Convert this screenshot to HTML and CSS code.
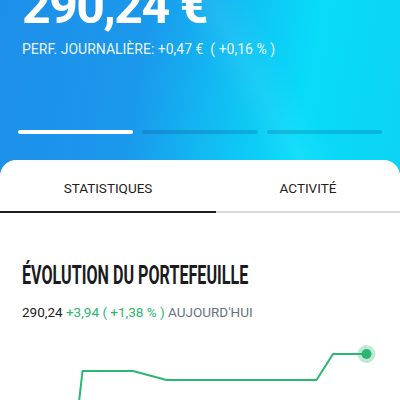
FILE: index.html
```html
<!DOCTYPE html>
<html lang="fr">
<head>
    <meta charset="UTF-8">
    <meta name="viewport" content="width=device-width, initial-scale=1.0">
    <title>Portefeuille</title>
    <link rel="stylesheet" href="styles.css">
</head>
<body>

<div class="header">
    <div class="total">290,24 €</div>
    <div class="perf">PERF. JOURNALIÈRE: +0,47 € &nbsp;( +0,16 % )</div>
    <div class="steps">
        <span class="step active"></span>
        <span class="step"></span>
        <span class="step"></span>
    </div>
</div>

<div class="sheet">
    <div class="tabs">
        <div class="tab selected">STATISTIQUES</div>
        <div class="tab">ACTIVITÉ</div>
    </div>

    <div class="section">
        <h2>ÉVOLUTION DU PORTEFEUILLE</h2>
        <p class="resume">
            <span class="valeur">290,24</span>
            <span class="gain">+3,94 ( +1,38 % )</span>
            <span class="periode">AUJOURD'HUI</span>
        </p>
        <svg class="chart" width="400" height="64" viewBox="0 340 400 64">
            <polyline points="78,410 82.5,370 133,370 166.5,379 316.5,379 333,353 366.5,353"
                      fill="none" stroke="#2bb673" stroke-width="2" stroke-linejoin="round"/>
            <circle cx="366.5" cy="353" r="9" fill="#2bb673" opacity="0.3"/>
            <circle cx="366.5" cy="353" r="5" fill="#2bb673"/>
        </svg>
    </div>
</div>

</body>
</html>
```

FILE: styles.css
```css
body {
    margin: 0;
    width: 400px;
    height: 400px;
    overflow: hidden;
    font-family: 'Roboto', 'Liberation Sans', sans-serif;
    background-color: #fff;
}

/* Bandeau bleu du haut */
.header {
    display: flex;
    flex-direction: column;
    height: 176px;
    padding: 0 18px 0 22px;
    box-sizing: border-box;
    color: #fff;
    background:
        linear-gradient(60deg, rgba(255, 255, 255, 0) 55%, rgba(255, 255, 255, 0.06) 62%, rgba(255, 255, 255, 0) 70%),
        linear-gradient(100deg, #1e8fe9 0%, #1a98ec 35%, #10c2f4 58%, #07dcf9 75%, #0dd3f3 100%);
}

.total {
    margin-top: -19px;
    font-size: 50px;
    font-weight: 700;
    line-height: 50px;
    letter-spacing: -1.5px;
}

.perf {
    margin-top: 10px;
    font-size: 14px;
    line-height: 16px;
    color: rgba(255, 255, 255, 0.92);
}

.steps {
    display: flex;
    gap: 9px;
    margin-top: 73px;
    margin-left: -4px;
}

.step {
    flex: 1;
    height: 4px;
    border-radius: 2px;
    background-color: rgba(0, 60, 110, 0.2);
}

.step.active {
    background-color: #fff;
}

/* Partie blanche */
.sheet {
    margin-top: -16px;
    background-color: #fff;
    border-radius: 16px 16px 0 0;
    position: relative;
}

.tabs {
    display: flex;
}

.tab {
    flex: 1;
    text-align: center;
    padding: 21px 0 15px;
    font-size: 13.5px;
    line-height: 15px;
    font-weight: 400;
    color: #1e1e20;
    border-bottom: 2px solid #d6d7dc;
}

.tab.selected {
    flex: 0 0 216px;
    border-bottom-color: #1f1f22;
}

.section {
    padding: 0 22px;
}

.section h2 {
    display: inline-block;
    margin: 50px 0 0;
    font-size: 25px;
    line-height: 26px;
    font-weight: 700;
    color: #1b1b1d;
    white-space: nowrap;
    transform: scaleX(0.645);
    transform-origin: left center;
}

.resume {
    margin: 15px 0 0;
    font-size: 13.5px;
    line-height: 16px;
}

.valeur {
    color: #222;
}

.gain {
    color: #2bb673;
}

.periode {
    color: #6b7280;
}

.chart {
    display: block;
    margin: 21px 0 0 -22px;
}
```
